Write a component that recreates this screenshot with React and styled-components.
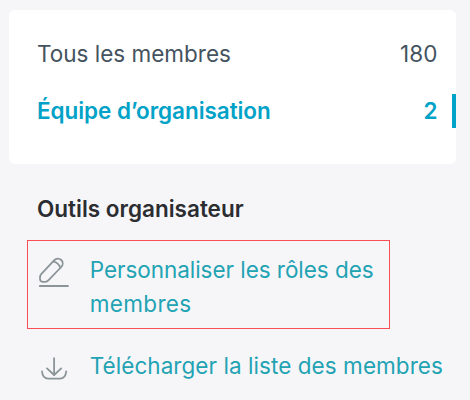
import React from 'react';
import styled, { createGlobalStyle } from 'styled-components';

const filters = [
    { label: 'Tous les membres', count: 180, spacing: '0' },
    { label: 'Équipe d’organisation', count: 2, active: true, spacing: '-0.06px' },
];

const PencilIcon = () => (
    <Icon width="32" height="32" viewBox="0 0 32 32">
        <path d="M2 22.2 C2 20.9 2.4 20 3.2 19.1 L16.1 5.3 C18.1 3.1 21.4 3.1 23.3 5 C25.2 6.9 25.2 9.9 23.2 12 L10.6 25.2 C9.6 26.3 8.6 26.8 7.2 26.8 H5 C3 26.8 2 25.8 2 24 Z" />
        <path d="M15.2 6.4 C18.6 7.2 21.2 9.6 22.4 12.8" />
        <path d="M1.8 31 H30" />
    </Icon>
);

const DownloadIcon = () => (
    <Icon width="32" height="32" viewBox="0 0 32 32">
        <path d="M16.1 7.2 V23.8" />
        <path d="M9 17.4 L16.1 24 L23.2 17.4" />
        <path d="M4 20.3 C4.3 24.6 6.3 27.6 10.3 27.6 H21.9 C25.9 27.6 27.9 24.6 28.2 20.3" />
    </Icon>
);

const App = () => (
    <Sidebar>
        <GlobalStyle />
        <Card>
            {filters.map((item) => (
                <FilterRow key={item.label} $active={item.active} $spacing={item.spacing}>
                    <span>{item.label}</span>
                    <Count $active={item.active}>{item.count}</Count>
                </FilterRow>
            ))}
        </Card>
        <Title>Outils organisateur</Title>
        <Tool $highlighted>
            <PencilIcon />
            <ToolLink href="#">Personnaliser les rôles des<br /><Wide>membres</Wide></ToolLink>
        </Tool>
        <Tool>
            <DownloadIcon />
            <ToolLink href="#"><Wide $spacing="0.06px">Télécharger la liste des membres</Wide></ToolLink>
        </Tool>
    </Sidebar>
);

export default App;

const GlobalStyle = createGlobalStyle`
    body {
        margin: 0;
        background-color: #f6f6f9;
        overflow: hidden;
    }
`;

const Sidebar = styled.aside`
    box-sizing: border-box;
    width: 470px;
    height: 400px;
    padding: 10px 14px 0 9px;
    background-color: #f6f6f9;
    font-family: Inter, "Liberation Sans", sans-serif;
    font-size: 22.5px;
    line-height: 34px;
    white-space: nowrap;
`;

const Card = styled.section`
    box-sizing: border-box;
    height: 154px;
    padding-top: 27px;
    background-color: #ffffff;
    border-radius: 6px;
`;

const FilterRow = styled.div`
    display: flex;
    justify-content: space-between;
    margin-bottom: 23px;
    padding: 0 14.5px 0 28px;
    border-right: 4px solid ${({ $active }) => ($active ? '#00a2c7' : 'transparent')};
    color: ${({ $active }) => ($active ? '#00a2c7' : '#455360')};
    font-weight: ${({ $active }) => ($active ? 600 : 380)};
    letter-spacing: ${({ $spacing }) => $spacing};
`;

const Count = styled.span`
    letter-spacing: ${({ $active }) => ($active ? '0' : '0.1px')};
`;

const Title = styled.h2`
    margin: 28px 0 0 28px;
    color: #2b2d31;
    font-size: 22.5px;
    font-weight: 600;
    line-height: 34px;
`;

const Tool = styled.div`
    box-sizing: border-box;
    display: flex;
    width: ${({ $highlighted }) => ($highlighted ? '363px' : '440px')};
    height: ${({ $highlighted }) => ($highlighted ? '89px' : '68px')};
    margin: ${({ $highlighted }) => ($highlighted ? '14px 0 7px 18px' : '0 0 0 18px')};
    padding: 12px 0 0 10px;
    border: 1px solid ${({ $highlighted }) => ($highlighted ? '#fb4d55' : 'transparent')};
`;

const ToolLink = styled.a`
    margin-left: 19.7px;
    color: #22a3b3;
    font-weight: 380;
    letter-spacing: -0.04px;
    text-decoration: none;
`;

const Wide = styled.span`
    letter-spacing: ${({ $spacing }) => $spacing || '0.35px'};
`;

const Icon = styled.svg`
    flex: none;
    margin-top: 2px;
    fill: none;
    stroke: #8b9599;
    stroke-width: 1.8;
    stroke-linecap: round;
    stroke-linejoin: round;
`;
